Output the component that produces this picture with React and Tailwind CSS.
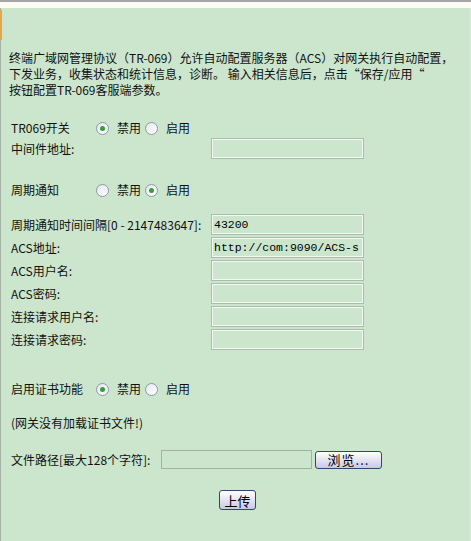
import React from "react";

const font = { fontFamily: '"Noto Sans CJK SC", sans-serif' };

function Radio({ checked }) {
  return (
    <span className="inline-flex h-[13px] w-[13px] items-center justify-center rounded-full border border-[#8a9aa8] bg-gradient-to-br from-[#e4e8ec] to-[#ffffff]">
      {checked && <span className="h-[5px] w-[5px] rounded-full bg-[#3c9a3c]" />}
    </span>
  );
}

function RadioPair({ first }) {
  return (
    <div className="flex items-center">
      <Radio checked={first} />
      <span className="ml-[8px] w-[28px]">禁用</span>
      <Radio checked={!first} />
      <span className="ml-[8px]">启用</span>
    </div>
  );
}

function Field({ value }) {
  return (
    <div
      className="flex h-[21px] w-[153px] items-center overflow-hidden whitespace-nowrap border border-[#a9bda9] px-[2px] text-[11.5px] text-black shadow-[inset_1px_1px_0_#f4f8f4,inset_-1px_-1px_0_#f4f8f4]"
      style={{ fontFamily: '"Liberation Mono", monospace' }}
    >
      {value}
    </div>
  );
}

function Row({ label, value, className = "" }) {
  return (
    <div className={`flex items-center ${className}`}>
      <div className="w-[200px] whitespace-nowrap">{label}</div>
      <Field value={value} />
    </div>
  );
}

function Btn({ children, className = "" }) {
  return (
    <button
      className={`flex items-center justify-center rounded-[3px] border border-[#2d4a6a] bg-gradient-to-b from-[#ffffff] to-[#c9c9e4] text-[13px] leading-none text-black ${className}`}
      style={font}
    >
      {children}
    </button>
  );
}

export default function App() {
  return (
    <div className="relative h-[541px] w-[471px] overflow-hidden bg-[#cbe6cd] text-[12px] text-[#111]" style={font}>
      <div className="h-[2px] bg-[#a5a5a5]" />
      <div className="h-[6px] bg-[#fdfcf2]" />
      <div className="absolute bottom-0 left-0 top-[8px] w-[1px] bg-[#a4b4a4]" />
      <div className="absolute left-0 top-[10px] h-[30px] w-[2px] bg-[#e0a850]" />
      <div className="absolute bottom-0 right-0 top-[8px] w-[1px] bg-[#d8ecd8]" />

      <div className="pl-[9px] pt-[42px] leading-[16px]">
        <div className="whitespace-nowrap">终端广域网管理协议（TR-069）允许自动配置服务器（ACS）对网关执行自动配置，</div>
        <div className="whitespace-nowrap">下发业务，收集状态和统计信息，诊断。 输入相关信息后，点击“保存/应用“</div>
        <div className="whitespace-nowrap">按钮配置TR-069客服端参数。</div>
      </div>

      <div className="pl-[11px]">
        <div className="mt-[22px] flex h-[16px] items-center">
          <div className="w-[85px]">TR069开关</div>
          <RadioPair first={true} />
        </div>
        <Row className="mt-[2px]" label="中间件地址:" value="" />

        <div className="mt-[23px] flex h-[16px] items-center">
          <div className="w-[85px]">周期通知</div>
          <RadioPair first={false} />
        </div>

        <div className="mt-[16px] flex flex-col gap-[2px]">
          <Row label="周期通知时间间隔[0 - 2147483647]:" value="43200" />
          <Row label="ACS地址:" value="http://com:9090/ACS-s" />
          <Row label="ACS用户名:" value="" />
          <Row label="ACS密码:" value="" />
          <Row label="连接请求用户名:" value="" />
          <Row label="连接请求密码:" value="" />
        </div>

        <div className="mt-[31px] flex h-[16px] items-center">
          <div className="w-[85px]">启用证书功能</div>
          <RadioPair first={true} />
        </div>

        <div className="mt-[18px] h-[16px] leading-[16px]">(网关没有加载证书文件!)</div>

        <div className="mt-[19px] flex items-center">
          <div className="w-[150px] whitespace-nowrap">文件路径[最大128个字符]:</div>
          <div className="h-[19px] w-[151px] border border-[#9fb39f]" />
          <Btn className="ml-[3px] h-[18px] w-[67px] tracking-[1px]">浏览...</Btn>
        </div>

        <div className="mt-[21px] flex">
          <Btn className="ml-[208px] h-[20px] w-[37px]">上传</Btn>
        </div>
      </div>
    </div>
  );
}
